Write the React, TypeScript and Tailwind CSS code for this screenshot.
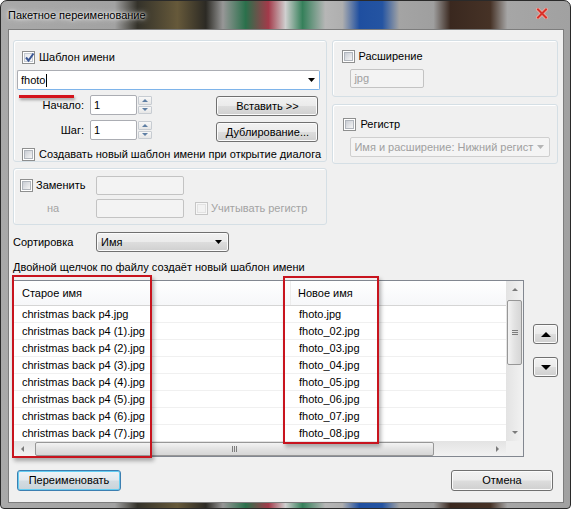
import type { ReactNode } from 'react';

// Win7-style "batch rename" dialog

function Check({ checked = false, disabled = false }: { checked?: boolean; disabled?: boolean }) {
  return (
    <span
      className={`relative flex h-[13px] w-[13px] shrink-0 items-center justify-center border ${
        disabled ? 'border-[#c6c6c6] bg-[#f7f7f7]' : 'border-[#8e8f8f] bg-white'
      }`}
    >
      <span
        className={`h-[9px] w-[9px] border ${
          disabled
            ? 'border-[#e2e2e2] bg-[#f2f2f2]'
            : checked
              ? 'border-[#c5cad2] bg-[linear-gradient(135deg,#e6e8ec,#fbfbfb)]'
              : 'border-[#b0b5bc] bg-[linear-gradient(135deg,#c9cdd4,#f5f5f5)]'
        }`}
      />
      {checked && (
        <svg className="absolute left-[1px] top-[0px]" width="11" height="11" viewBox="0 0 11 11">
          <polyline points="2,5.5 4.5,8.5 9.5,1.5" fill="none" stroke="#3b5795" strokeWidth="2" />
        </svg>
      )}
    </span>
  );
}

function Btn({ children, className = '', focused = false }: { children: ReactNode; className?: string; focused?: boolean }) {
  return (
    <div
      className={`flex items-center justify-center rounded-[3px] border ${
        focused
          ? 'border-[#3c7fb1] bg-[linear-gradient(to_bottom,#eef3f6_0%,#e3e9ed_48%,#d3dce2_52%,#c9d3d9_100%)] shadow-[inset_0_0_0_1px_#64cdf2]'
          : 'border-[#707070] bg-[linear-gradient(to_bottom,#f2f2f2_0%,#ebebeb_48%,#dddddd_52%,#cfcfcf_100%)] shadow-[inset_0_0_0_1px_#fbfbfb]'
      } ${className}`}
    >
      {children}
    </div>
  );
}

function Arrow({ color = '#000' }: { color?: string }) {
  return (
    <svg width="7" height="4" viewBox="0 0 7 4">
      <polygon points="0,0 7,0 3.5,4" fill={color} />
    </svg>
  );
}

function Tri({ dir, color = '#707070', size = 4 }: { dir: 'up' | 'down' | 'left' | 'right'; color?: string; size?: number }) {
  const s = size;
  const pts =
    dir === 'up'
      ? `0,${s} ${s * 2},${s} ${s},0`
      : dir === 'down'
        ? `0,0 ${s * 2},0 ${s},${s}`
        : dir === 'left'
          ? `${s},0 ${s},${s * 2} 0,${s}`
          : `0,0 0,${s * 2} ${s},${s}`;
  const w = dir === 'up' || dir === 'down' ? s * 2 : s;
  const h = dir === 'up' || dir === 'down' ? s : s * 2;
  return (
    <svg width={w} height={h} viewBox={`0 0 ${w} ${h}`}>
      <polygon points={pts} fill={color} />
    </svg>
  );
}

function Spinner() {
  return (
    <div className="ml-[1px] flex h-[18px] w-[14px] flex-col gap-[1px]">
      <div className="flex flex-1 items-center justify-center rounded-[1px] border border-[#c7ccd2] bg-[linear-gradient(#f8f8f8,#e6e6e6)]">
        <Tri dir="up" color="#5f7fa4" size={3} />
      </div>
      <div className="flex flex-1 items-center justify-center rounded-[1px] border border-[#c7ccd2] bg-[linear-gradient(#f8f8f8,#e6e6e6)]">
        <Tri dir="down" color="#5f7fa4" size={3} />
      </div>
    </div>
  );
}

function Group({ className = '', children }: { className?: string; children: ReactNode }) {
  return (
    <div className={`rounded-[3px] border border-[#d5dfe5] shadow-[inset_1px_1px_0_#ffffff] ${className}`}>{children}</div>
  );
}

const oldNames = [
  'christmas back p4.jpg',
  'christmas back p4 (1).jpg',
  'christmas back p4 (2).jpg',
  'christmas back p4 (3).jpg',
  'christmas back p4 (4).jpg',
  'christmas back p4 (5).jpg',
  'christmas back p4 (6).jpg',
  'christmas back p4 (7).jpg',
];
const newNames = [
  'fhoto.jpg',
  'fhoto_02.jpg',
  'fhoto_03.jpg',
  'fhoto_04.jpg',
  'fhoto_05.jpg',
  'fhoto_06.jpg',
  'fhoto_07.jpg',
  'fhoto_08.jpg',
];

export default function App() {
  return (
    <div className="h-[509px] w-[571px] overflow-hidden bg-white font-['Liberation_Sans',Arial,sans-serif] text-[11px] leading-[13px] text-black">
      <div className="flex h-[509px] w-[571px] flex-col rounded-t-[7px] rounded-b-[4px] border border-[#2a2a2a] bg-[linear-gradient(90deg,#a9a9a9_0%,#a2a2a2_20%,#34322a_24%,#66593a_31%,#2c2a24_36%,#979797_39%,#2a704b_43%,#a33a4a_47%,#cfcfcf_50%,#35805a_53%,#b6b6b6_57%,#afafaf_60%,#1f4fa0_63%,#2454a2_67%,#a4a4a4_70%,#9f9f9f_76%,#3a281f_79%,#463226_86%,#a6a6a6_89%,#a1a1a1_100%)]">
        {/* title bar */}
        <div className="flex h-[28px] shrink-0 items-center justify-between pl-[7px] pr-[22px]">
          <span className="text-[11px] [text-shadow:0_0_6px_#ffffff,0_0_3px_#ffffff]">Пакетное переименование</span>
          <svg width="12" height="11" viewBox="0 0 12 11" className="mb-[4px]">
            <path d="M2 1.5 L10 9.5 M10 1.5 L2 9.5" stroke="#eeb0a8" strokeWidth="3.6" strokeLinecap="square" />
            <path d="M2 1.5 L10 9.5 M10 1.5 L2 9.5" stroke="#d8322a" strokeWidth="2" strokeLinecap="square" />
          </svg>
        </div>

        {/* client area */}
        <div className="relative ml-[7px] mr-[6px] flex h-[474px] shrink-0 flex-col border border-[#7d7d7d] bg-[#f0f0f0] pl-[4px] pr-[5px] pt-[10px]">
          {/* top groups */}
          <div className="flex h-[185px] gap-[5px]">
            <div className="flex w-[315px] flex-col gap-[6px]">
              <Group className="h-[122px]">
                <div className="flex h-[15px] items-center gap-[4px] pl-[8px] mt-[9px]">
                  <Check checked />
                  <span>Шаблон имени</span>
                </div>
                <div className="ml-[3px] mt-[5px] flex h-[20px] w-[303px] items-center justify-between rounded-[2px] border border-[#abadb3] border-b-[#7eb4ea] border-r-[#7eb4ea] bg-white pl-[3px] pr-[4px]">
                  <span className="flex items-center">
                    fhoto
                    <span className="ml-[1px] inline-block h-[13px] w-[1px] bg-black" />
                  </span>
                  <Arrow />
                </div>
                <div className="mt-[5px] flex justify-between pr-[8px]">
                  <div className="flex flex-col gap-[5px]">
                    <div className="flex h-[20px] items-center">
                      <span className="w-[76px] pr-[6px] text-right">Начало:</span>
                      <div className="flex h-[20px] w-[47px] items-center rounded-[2px] border border-[#abadb3] bg-white pl-[3px]">1</div>
                      <Spinner />
                    </div>
                    <div className="flex h-[20px] items-center">
                      <span className="w-[76px] pr-[6px] text-right">Шаг:</span>
                      <div className="flex h-[20px] w-[47px] items-center rounded-[2px] border border-[#abadb3] bg-white pl-[3px]">1</div>
                      <Spinner />
                    </div>
                  </div>
                  <div className="flex flex-col gap-[6px] pt-[1px]">
                    <Btn className="h-[20px] w-[102px]">Вставить &gt;&gt;</Btn>
                    <Btn className="h-[20px] w-[102px]">Дублирование...</Btn>
                  </div>
                </div>
                <div className="mt-[6px] flex h-[13px] items-center gap-[4px] pl-[8px]">
                  <Check />
                  <span className="whitespace-nowrap">Создавать новый шаблон имени при открытие диалога</span>
                </div>
              </Group>

              <Group className="h-[57px]">
                <div className="mt-[7px] flex h-[19px] items-center">
                  <div className="flex w-[82px] items-center gap-[3px] pl-[6px]">
                    <Check />
                    <span>Заменить</span>
                  </div>
                  <div className="h-[19px] w-[88px] rounded-[2px] border border-[#c3c3c3] bg-[#f3f3f3]" />
                </div>
                <div className="mt-[4px] flex h-[19px] items-center">
                  <span className="w-[82px] pl-[33px] text-[#a3a3a3]">на</span>
                  <div className="h-[19px] w-[88px] rounded-[2px] border border-[#c3c3c3] bg-[#f3f3f3]" />
                  <div className="ml-[11px] flex items-center gap-[3px]">
                    <Check disabled />
                    <span className="text-[#a3a3a3]">Учитывать регистр</span>
                  </div>
                </div>
              </Group>
            </div>

            <div className="flex w-[226px] flex-col gap-[7px]">
              <Group className="h-[57px]">
                <div className="mt-[8px] flex h-[15px] items-center gap-[3px] pl-[9px]">
                  <Check />
                  <span>Расширение</span>
                </div>
                <div className="ml-[17px] mt-[5px] flex h-[19px] w-[74px] items-center rounded-[2px] border border-[#c3c3c3] bg-[#f3f3f3] pl-[3px] text-[#a0a0a0]">
                  jpg
                </div>
              </Group>
              <Group className="h-[60px]">
                <div className="mt-[12px] flex h-[15px] items-center gap-[4px] pl-[10px]">
                  <Check />
                  <span>Регистр</span>
                </div>
                <div className="ml-[17px] mt-[5px] flex h-[20px] w-[200px] items-center justify-between rounded-[2px] border border-[#cfcfcf] bg-[#f4f4f4] pl-[3px] pr-[5px] text-[#a0a0a0]">
                  <span className="whitespace-nowrap">Имя и расширение: Нижний регист</span>
                  <Arrow color="#b5b5b5" />
                </div>
              </Group>
            </div>
          </div>

          {/* sorting */}
          <div className="mt-[7px] flex h-[20px] items-center">
            <span className="w-[83px]">Сортировка</span>
            <Btn className="h-[20px] w-[133px] !justify-between pl-[4px] pr-[6px]">
              <span>Имя</span>
              <Arrow />
            </Btn>
          </div>
          <div className="mt-[9px] h-[13px] whitespace-nowrap">Двойной щелчок по файлу создаёт новый шаблон имени</div>

          {/* list */}
          <div className="mt-[6px] flex gap-[9px]">
            <div className="flex h-[177px] w-[511px] flex-col border border-[#828790] bg-white">
              <div className="flex h-[160px]">
                <div className="flex w-[492px] flex-col overflow-hidden">
                  <div className="flex h-[25px] shrink-0 border-b border-[#d5d5d5] bg-[linear-gradient(#ffffff,#f6f7f9)]">
                    <div className="flex w-[277px] items-center border-r border-[#ececec] pl-[8px]">Старое имя</div>
                    <div className="flex flex-1 items-center pl-[7px]">Новое имя</div>
                  </div>
                  {oldNames.map((n, i) => (
                    <div key={n} className="flex h-[17px] shrink-0 items-center border-b border-[#f0f0f0]">
                      <div className="w-[277px] whitespace-nowrap pl-[8px]">{n}</div>
                      <div className="flex-1 whitespace-nowrap pl-[8px]">{newNames[i]}</div>
                    </div>
                  ))}
                </div>
                {/* vertical scrollbar */}
                <div className="flex w-[17px] flex-col items-center bg-[linear-gradient(90deg,#e3e3e3,#f2f2f2)]">
                  <div className="flex h-[17px] items-center justify-center">
                    <Tri dir="up" color="#7a7a7a" size={3} />
                  </div>
                  <div className="mt-[2px] flex h-[65px] w-[15px] items-center justify-center rounded-[2px] border border-[#979797] bg-[linear-gradient(90deg,#f3f3f3,#e2e2e2_50%,#d6d6d6)]">
                    <div className="flex flex-col gap-[1px]">
                      <span className="h-[1px] w-[6px] bg-[#7d7d7d]" />
                      <span className="h-[1px] w-[6px] bg-[#7d7d7d]" />
                      <span className="h-[1px] w-[6px] bg-[#7d7d7d]" />
                    </div>
                  </div>
                  <div className="mt-auto flex h-[17px] items-center justify-center">
                    <Tri dir="down" color="#7a7a7a" size={3} />
                  </div>
                </div>
              </div>
              {/* horizontal scrollbar */}
              <div className="flex h-[15px]">
                <div className="flex w-[492px] items-center bg-[linear-gradient(#e3e3e3,#f2f2f2)]">
                  <div className="flex w-[17px] items-center justify-center">
                    <Tri dir="left" color="#7a7a7a" size={3} />
                  </div>
                  <div className="ml-[4px] flex h-[14px] w-[399px] items-center justify-center rounded-[2px] border border-[#979797] bg-[linear-gradient(#f3f3f3,#e2e2e2_50%,#d6d6d6)]">
                    <div className="flex gap-[1px]">
                      <span className="h-[6px] w-[1px] bg-[#7d7d7d]" />
                      <span className="h-[6px] w-[1px] bg-[#7d7d7d]" />
                      <span className="h-[6px] w-[1px] bg-[#7d7d7d]" />
                    </div>
                  </div>
                  <div className="ml-auto flex w-[17px] items-center justify-center">
                    <Tri dir="right" color="#7a7a7a" size={3} />
                  </div>
                </div>
                <div className="w-[17px] bg-[#f0f0f0]" />
              </div>
            </div>

            <div className="mt-[44px] flex flex-col gap-[13px]">
              <Btn className="h-[20px] w-[25px]">
                <Tri dir="up" color="#000" size={5} />
              </Btn>
              <Btn className="h-[20px] w-[25px]">
                <Tri dir="down" color="#000" size={5} />
              </Btn>
            </div>
          </div>

          {/* bottom buttons */}
          <div className="mt-[13px] flex justify-between pl-[4px] pr-[5px]">
            <Btn focused className="h-[21px] w-[104px]">
              Переименовать
            </Btn>
            <Btn className="h-[21px] w-[102px]">Отмена</Btn>
          </div>

          {/* red annotations */}
          <div className="absolute left-[10px] top-[65px] h-[3px] w-[55px] bg-[#d4141c] shadow-[1px_2px_3px_rgba(0,0,0,0.35)]" />
          <div className="absolute left-[3px] top-[245px] h-[183px] w-[140px] border-2 border-[#c8141e] shadow-[2px_3px_4px_rgba(0,0,0,0.3)]" />
          <div className="absolute left-[274px] top-[246px] h-[168px] w-[96px] border-2 border-[#c8141e] shadow-[2px_3px_4px_rgba(0,0,0,0.3)]" />
        </div>
      </div>
    </div>
  );
}
